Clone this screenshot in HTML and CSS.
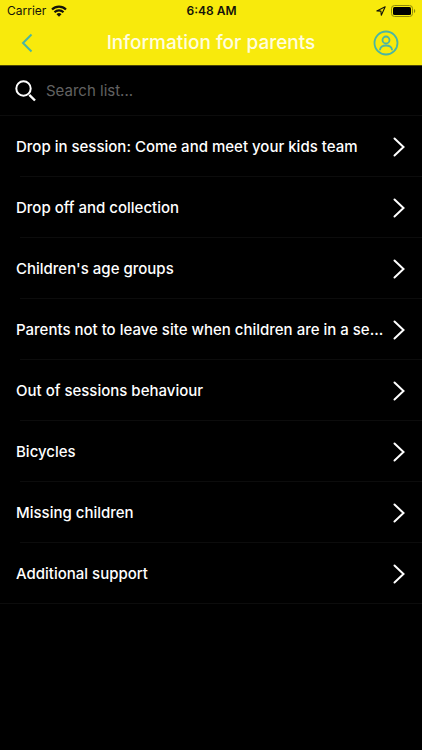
FILE: index.html
```html
<!DOCTYPE html>
<html lang="en">
<head>
<meta charset="utf-8">
<meta name="viewport" content="width=device-width, initial-scale=1">
<title>Information for parents</title>
<link rel="stylesheet" href="styles.css">
</head>
<body>
<svg class="defs" width="0" height="0" aria-hidden="true">
  <symbol id="chevron" viewBox="0 0 12 20"><path d="M1.500 1.500 10.500 10l-9 8.500" fill="none" stroke="currentColor" stroke-width="2" stroke-linecap="round"/></symbol>
</svg>
<header class="header">
  <div class="status">
    <div class="status-left">
      <span>Carrier</span>
      <svg width="16" height="12" viewBox="0 0 16 12" aria-hidden="true"><g fill="none" stroke="#14140a" stroke-width="2.200"><path d="M1 4.500a10 10 0 0 1 14 0"/><path d="M3.500 7.200a6.400 6.400 0 0 1 9 0"/></g><path d="M8 11.800 5.500 9.300a3.600 3.600 0 0 1 5 0z" fill="#14140a"/></svg>
    </div>
    <time class="clock">6:48 AM</time>
    <div class="status-right">
      <svg width="10" height="10" viewBox="0 0 10 10" aria-hidden="true"><path d="M.8 4.900 9.200.8 5.300 9.200 4.900 5.100z" fill="none" stroke="#14140a" stroke-width="1.100" stroke-linejoin="round"/></svg>
      <svg width="25" height="12" viewBox="0 0 25 12" aria-hidden="true"><rect x=".5" y=".5" width="21" height="11" rx="3" fill="none" stroke="#8f8a0a"/><rect x="2" y="2" width="18" height="8" rx="1.500" fill="#000"/><path d="M23 4v4c1.700-.6 1.700-3.400 0-4z" fill="#8f8a0a"/></svg>
    </div>
  </div>
  <nav class="navbar">
    <button class="icon-button back" type="button" aria-label="Back">
      <svg width="12" height="20" viewBox="0 0 12 20"><path d="M10.500 1.500 2 10l8.500 8.500" fill="none" stroke="currentColor" stroke-width="2"/></svg>
    </button>
    <h1 class="title">Information for parents</h1>
    <button class="icon-button profile" type="button" aria-label="Profile">
      <svg width="26" height="26" viewBox="0 0 26 26"><g fill="none" stroke="currentColor" stroke-width="1.800"><circle cx="13" cy="13" r="11.500"/><circle cx="13" cy="10" r="3.500"/><path d="M7 19.500c.6-3 3-4 6-4s5.400 1 6 4" stroke-linecap="round"/></g></svg>
    </button>
  </nav>
</header>
<main>
  <label class="search">
    <svg width="22" height="22" viewBox="0 0 22 22" aria-hidden="true"><circle cx="8.500" cy="8.500" r="7.200" fill="none" stroke="#fff" stroke-width="2"/><path d="m14.300 14.800 5.700 5.700" stroke="#fff" stroke-width="2.400"/></svg>
    <input type="search" placeholder="Search list..." aria-label="Search list">
  </label>
  <ul class="list">
    <li><a class="row" href="#"><span class="label">Drop in session: Come and meet your kids team</span><svg class="chevron"><use href="#chevron"/></svg></a></li>
    <li><a class="row" href="#"><span class="label">Drop off and collection</span><svg class="chevron"><use href="#chevron"/></svg></a></li>
    <li><a class="row" href="#"><span class="label">Children's age groups</span><svg class="chevron"><use href="#chevron"/></svg></a></li>
    <li><a class="row" href="#"><span class="label">Parents not to leave site when children are in a se...</span><svg class="chevron"><use href="#chevron"/></svg></a></li>
    <li><a class="row" href="#"><span class="label">Out of sessions behaviour</span><svg class="chevron"><use href="#chevron"/></svg></a></li>
    <li><a class="row" href="#"><span class="label">Bicycles</span><svg class="chevron"><use href="#chevron"/></svg></a></li>
    <li><a class="row" href="#"><span class="label">Missing children</span><svg class="chevron"><use href="#chevron"/></svg></a></li>
    <li><a class="row" href="#"><span class="label">Additional support</span><svg class="chevron"><use href="#chevron"/></svg></a></li>
  </ul>
</main>
</body>
</html>
```
FILE: styles.css
```css
* { box-sizing: border-box; }

body {
  margin: 0;
  background: #000;
  color: #fff;
  font-family: Inter, "Liberation Sans", sans-serif;
}

.defs { position: absolute; }

svg { display: block; }

.header {
  background: #f8ea0c;
  border-bottom: 1px solid #4a4604;
}

.status {
  display: grid;
  grid-template-columns: 1fr auto 1fr;
  align-items: center;
  height: 21px;
  padding: 0 6px 0 7px;
  color: #14140a;
  font-size: 12px;
}

.status-left,
.status-right {
  display: flex;
  align-items: center;
  gap: 5px;
}

.status-right { justify-content: flex-end; }

.clock { font-weight: 600; }

.navbar {
  display: grid;
  grid-template-columns: 40px 1fr 40px;
  align-items: center;
  height: 44px;
  padding: 0 16px;
}

.icon-button {
  display: flex;
  align-items: center;
  height: 40px;
  padding: 0;
  border: 0;
  background: none;
  color: #4ab5a4;
}

.back { padding-left: 5px; }

.profile { justify-content: flex-end; padding-right: 7px; }

.title {
  margin: 0;
  color: #fffde0;
  font-size: 19px;
  font-weight: 500;
  line-height: 24px;
  text-align: center;
}

.search {
  display: flex;
  align-items: center;
  gap: 9px;
  height: 50px;
  padding: 0 16px 0 15px;
  border-bottom: 1px solid #0c0c0c;
}

.search input {
  flex: 1;
  min-width: 0;
  padding: 0;
  border: 0;
  outline: 0;
  background: none;
  color: #fff;
  font: 15px/20px Inter, "Liberation Sans", sans-serif;
}

.search input::placeholder { color: #626262; }

.list {
  margin: 0;
  padding: 0;
  list-style: none;
}

.row {
  display: flex;
  align-items: center;
  gap: 4px;
  height: 61px;
  padding: 0 17px 0 16px;
  background: linear-gradient(#0c0c0c, #0c0c0c) 20px 100% / 100% 1px no-repeat;
  color: inherit;
  text-decoration: none;
}

.list li:last-child .row { background-position: 0 100%; }

.label {
  flex: 1;
  min-width: 0;
  overflow: hidden;
  font-size: 15px;
  font-weight: 500;
  line-height: 20px;
  text-overflow: ellipsis;
  white-space: nowrap;
}

.chevron {
  flex: none;
  width: 12px;
  height: 20px;
}
```
